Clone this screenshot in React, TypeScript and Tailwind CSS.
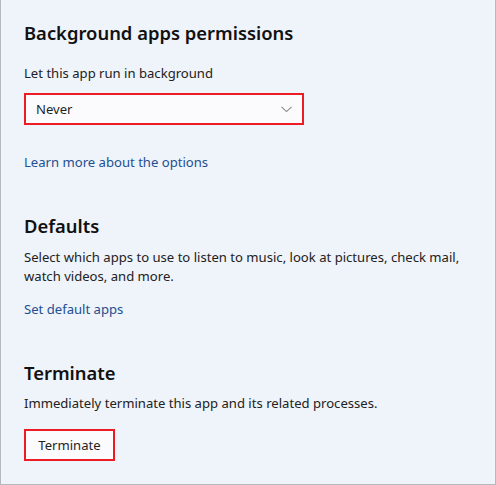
export default function App() {
  return (
    <div
      className="w-[496px] h-[485px] bg-[#eff3fa] border-l border-r border-b border-[#b5b9bd] pl-[23px] pt-[19px] text-[#1b1b1b]"
      style={{ fontFamily: '"Noto Sans", "Open Sans", sans-serif' }}
    >
      {/* Background apps */}
      <h2 className="text-[18.4px] leading-[28px] font-semibold text-[#111]">Background apps permissions</h2>
      <p className="mt-[16px] text-[13.1px] leading-[20px] text-[#222]">Let this app run in background</p>
      <div className="mt-[10px] flex h-[32px] w-[280px] items-center justify-between border-2 border-[#ed1c24] bg-[#fbfbfe] pl-[10px] pr-[10px]">
        <span className="text-[13.1px] leading-[20px] text-[#1f1f1f]">Never</span>
        <svg width="11" height="7" viewBox="0 0 11 7" fill="none">
          <path d="M0.5 0.8 L5.5 5.6 L10.5 0.8" stroke="#8a8a8a" strokeWidth="1.1" />
        </svg>
      </div>
      <a className="mt-[27px] block text-[13.1px] leading-[20px] text-[#1d4f91]">Learn more about the options</a>

      {/* Defaults */}
      <h2 className="mt-[40px] text-[18.4px] leading-[28px] font-semibold text-[#111]">Defaults</h2>
      <p className="mt-[8px] w-[450px] text-[13.1px] leading-[19px] text-[#222]">
        Select which apps to use to listen to music, look at pictures, check mail, watch videos, and more.
      </p>
      <a className="mt-[13px] block text-[13.1px] leading-[20px] text-[#1d4f91]">Set default apps</a>

      {/* Terminate */}
      <h2 className="mt-[40px] text-[18.4px] leading-[28px] font-semibold text-[#111]">Terminate</h2>
      <p className="mt-[6px] text-[13.1px] leading-[20px] text-[#222]">Immediately terminate this app and its related processes.</p>
      <button className="mt-[16px] flex h-[32px] w-[91px] items-center justify-center border-2 border-[#ed1c24] bg-[#fbfbfe] text-[13.1px] leading-[20px] text-[#1f1f1f]">
        Terminate
      </button>
    </div>
  )
}
